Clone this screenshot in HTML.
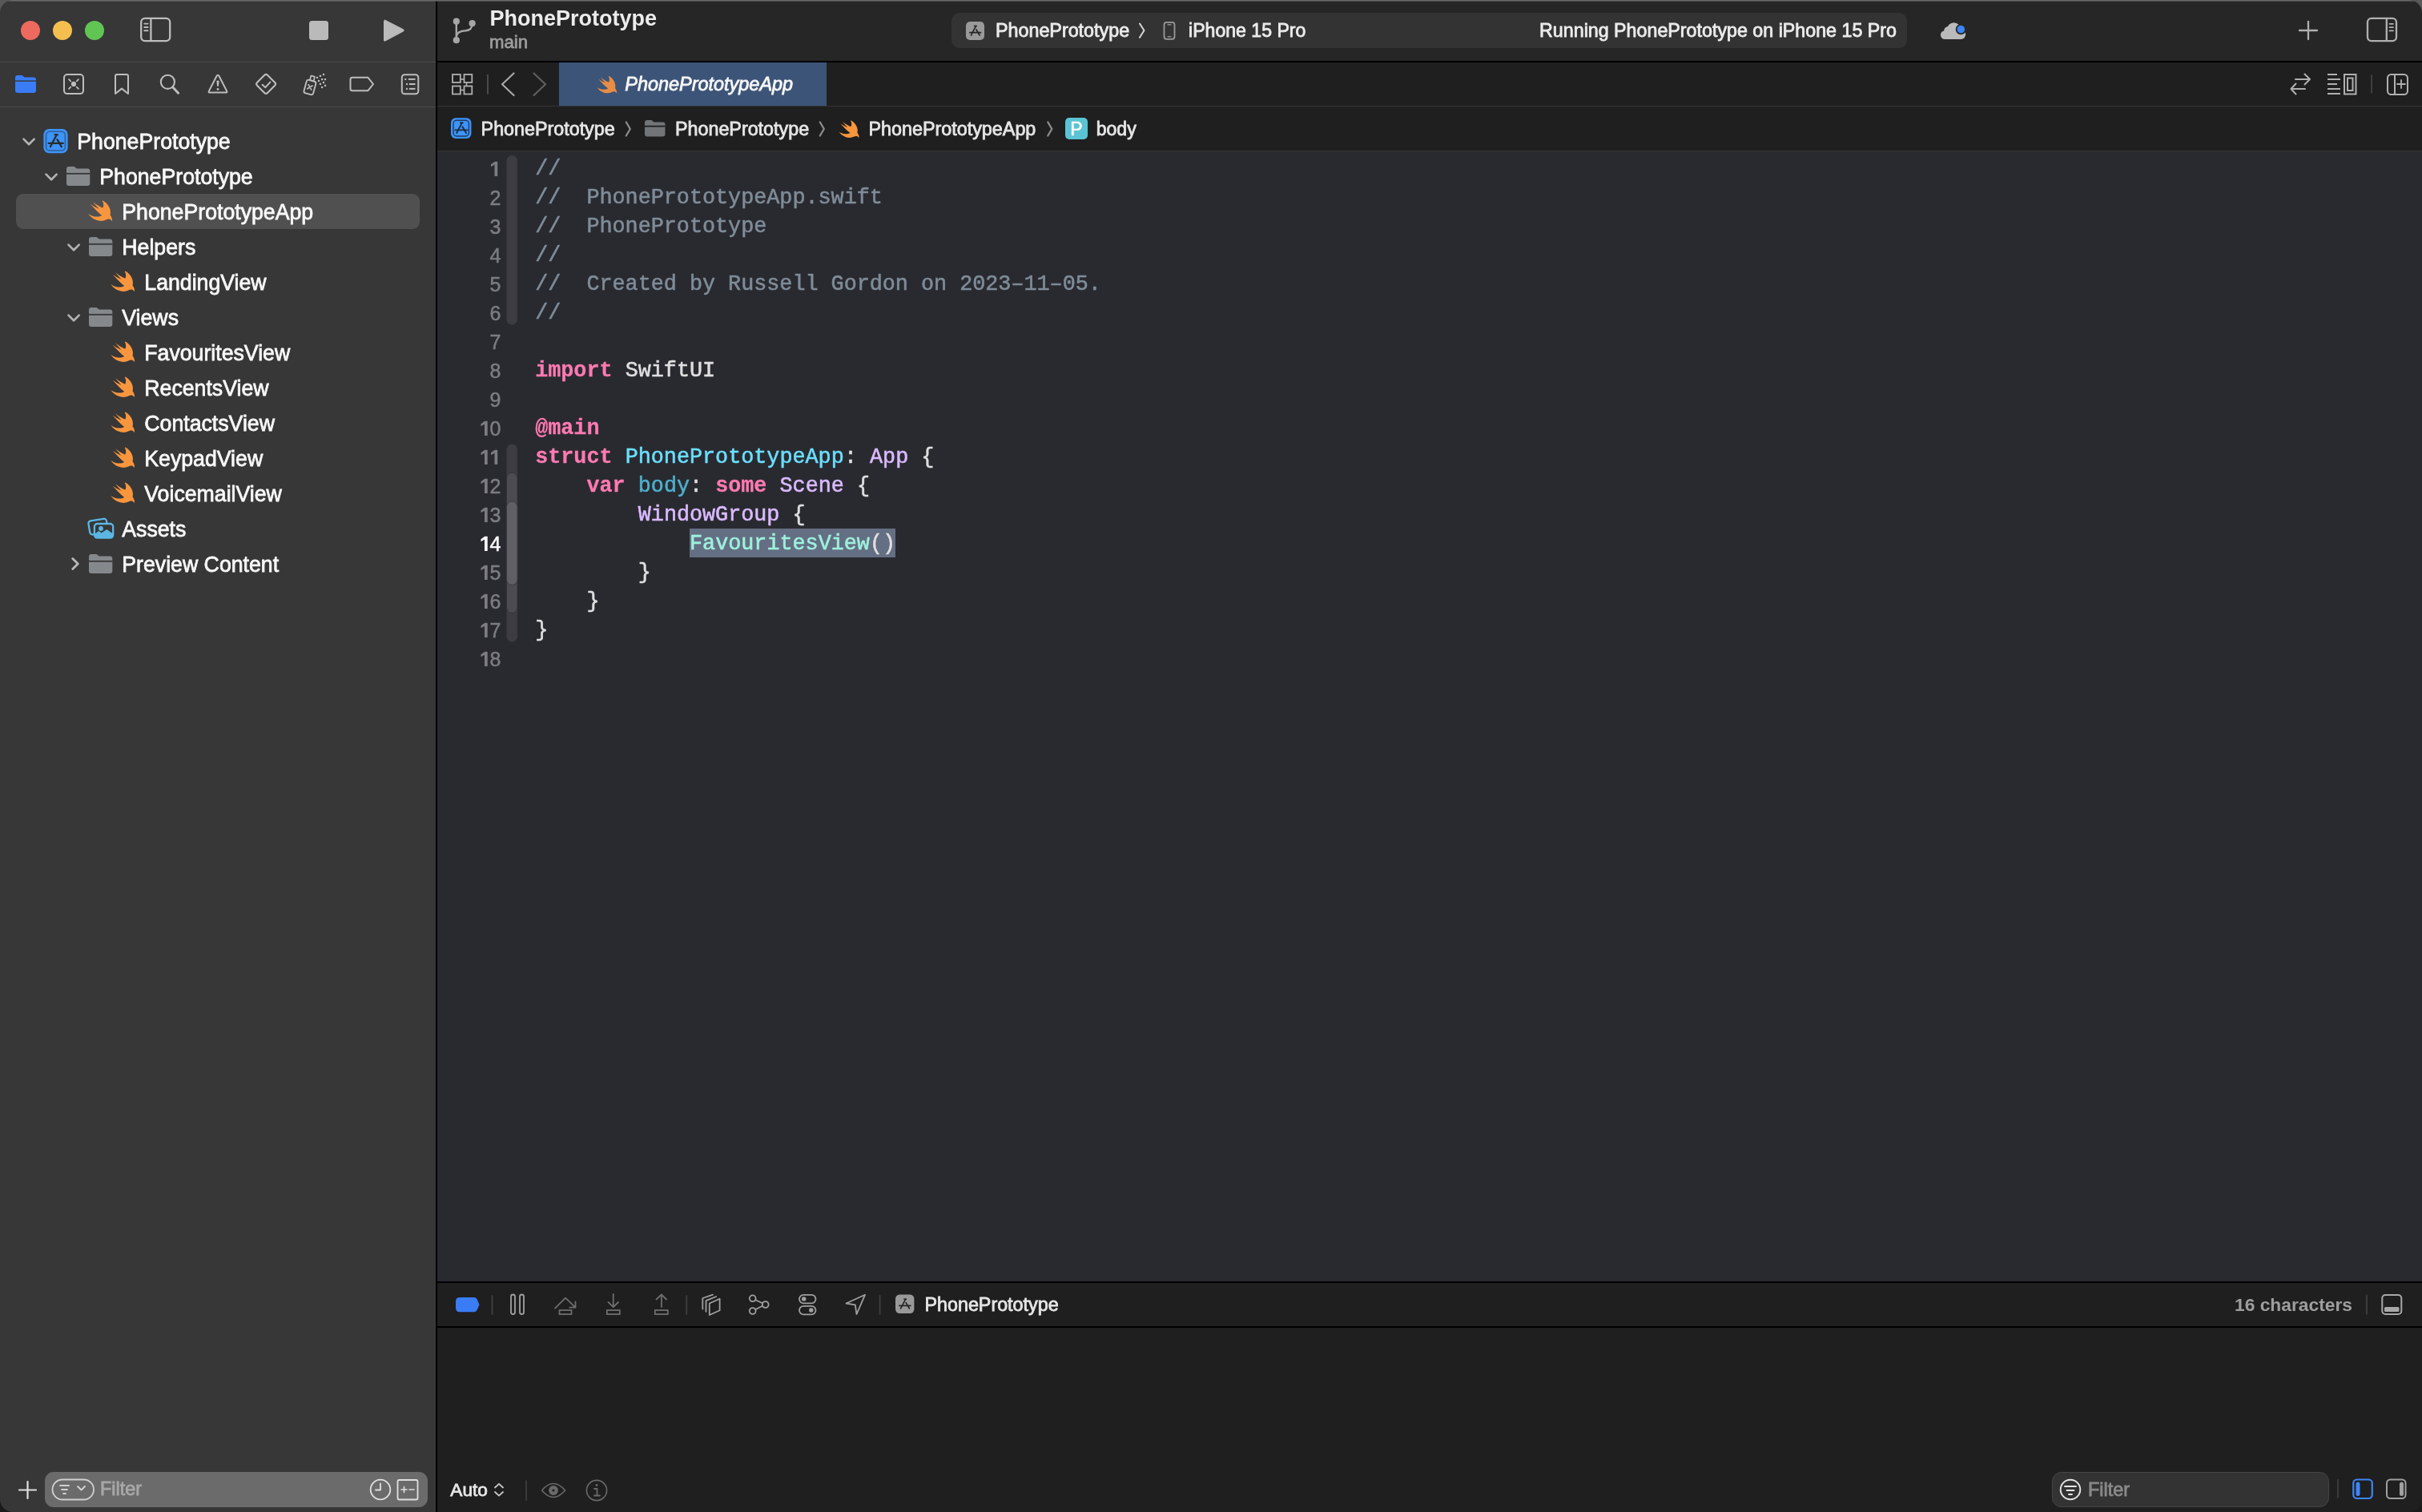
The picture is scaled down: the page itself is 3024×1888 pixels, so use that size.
<!DOCTYPE html>
<html><head><meta charset="utf-8"><title>Xcode</title>
<style>html,body{margin:0;padding:0;background:#000;width:3024px;height:1888px;overflow:hidden}svg{display:block;will-change:transform}</style>
</head><body>
<svg width="3024" height="1888" viewBox="0 0 3024 1888">
<defs><clipPath id="win"><rect x="0" y="0" width="3024" height="1888" rx="16"/></clipPath></defs>
<rect x="0" y="0" width="3024" height="1888" fill="#000" />
<rect x="0" y="0" width="3024" height="24" fill="#585858" />
<rect x="0" y="1864" width="3024" height="24" fill="#1a1a1a" />
<g clip-path="url(#win)">
<rect x="0" y="0" width="544" height="1888" fill="#373737" />
<rect x="544" y="0" width="2" height="1888" fill="#000" />
<rect x="546" y="0" width="2478" height="76" fill="#262626" />
<rect x="546" y="76" width="2478" height="2" fill="#000" />
<rect x="546" y="78" width="2478" height="54" fill="#1f1f1f" />
<rect x="546" y="132" width="2478" height="1" fill="#343434" />
<rect x="698" y="78" width="334" height="54" fill="#3c5478" />
<rect x="546" y="133" width="2478" height="55" fill="#1f1f1f" />
<rect x="546" y="188" width="2478" height="1" fill="#343434" />
<rect x="546" y="189" width="2478" height="1411" fill="#292a30" />
<rect x="546" y="1600" width="2478" height="2" fill="#000" />
<rect x="546" y="1602" width="2478" height="54" fill="#1f1f1f" />
<rect x="546" y="1656" width="2478" height="2" fill="#000" />
<rect x="546" y="1658" width="2478" height="230" fill="#1f1f1f" />
<rect x="0" y="77" width="544" height="1" fill="#4b4b4b" />
<rect x="0" y="133" width="544" height="1" fill="#4b4b4b" />
<rect x="0" y="0" width="3024" height="1.6" fill="#686868" />
</g>
<circle cx="38" cy="38" r="12" fill="#ee6a5e" stroke="none" stroke-width="2"/>
<circle cx="78" cy="38" r="12" fill="#f5bf4f" stroke="none" stroke-width="2"/>
<circle cx="118" cy="38" r="12" fill="#61c554" stroke="none" stroke-width="2"/>
<rect x="176.2" y="22.9" width="36" height="28.2" fill="none" stroke="#bdbdbd" stroke-width="2.3" rx="4.8" />
<line x1="188.4" y1="23" x2="188.4" y2="51" stroke="#bdbdbd" stroke-width="2.3" stroke-linecap="butt"/>
<line x1="180.3" y1="29.6" x2="184.6" y2="29.6" stroke="#bdbdbd" stroke-width="1.9" stroke-linecap="round"/>
<line x1="180.3" y1="34" x2="184.6" y2="34" stroke="#bdbdbd" stroke-width="1.9" stroke-linecap="round"/>
<line x1="180.3" y1="38.3" x2="184.6" y2="38.3" stroke="#bdbdbd" stroke-width="1.9" stroke-linecap="round"/>
<rect x="386" y="26" width="24" height="24" fill="#bababa" rx="3.5" />
<path d="M481 25.3 L503.6 36.8 Q505 37.9 503.6 39 L481 51 Q479.5 51.8 479.5 50 L479.5 26.8 Q479.5 24.6 481 25.3 Z" fill="#bababa" stroke="#bababa" stroke-width="1" stroke-linecap="round" stroke-linejoin="round" />
<path d="M19 97 Q19 94 22 94 L27.58 94 L30.58 96.5 L42 96.5 Q45 96.5 45 99.5 L45 113 Q45 116 42 116 L22 116 Q19 116 19 113 Z" fill="#3a7cf5" stroke="none" stroke-width="2" stroke-linecap="round" stroke-linejoin="round" />
<rect x="19" y="100.4" width="26" height="1.4" fill="#373737" />
<rect x="80" y="93.1" width="24" height="24" fill="none" stroke="#bdbdbd" stroke-width="2" rx="4" />
<circle cx="92" cy="104.9" r="3.1" fill="#bdbdbd" stroke="none" stroke-width="2"/>
<line x1="86.1" y1="99.1" x2="88.2" y2="101.3" stroke="#bdbdbd" stroke-width="1.8" stroke-linecap="round"/>
<line x1="97.9" y1="99.1" x2="95.8" y2="101.3" stroke="#bdbdbd" stroke-width="1.8" stroke-linecap="round"/>
<line x1="86.1" y1="110.9" x2="88.2" y2="108.7" stroke="#bdbdbd" stroke-width="1.8" stroke-linecap="round"/>
<line x1="97.9" y1="110.9" x2="95.8" y2="108.7" stroke="#bdbdbd" stroke-width="1.8" stroke-linecap="round"/>
<path d="M144 117 L144 95 Q144 93.1 146 93.1 L158 93.1 Q160 93.1 160 95 L160 117 L152 110.6 Z" fill="none" stroke="#bdbdbd" stroke-width="2" stroke-linecap="round" stroke-linejoin="round" />
<circle cx="209.4" cy="102.3" r="8.6" fill="none" stroke="#bdbdbd" stroke-width="2.1"/>
<line x1="215.6" y1="108.8" x2="222.6" y2="116.2" stroke="#bdbdbd" stroke-width="3" stroke-linecap="round"/>
<path d="M270.6 94.8 Q272 92.6 273.4 94.8 L283.1 113.6 Q284 115.6 281.8 115.6 L262.2 115.6 Q260 115.6 260.9 113.6 Z" fill="none" stroke="#bdbdbd" stroke-width="2" stroke-linecap="round" stroke-linejoin="round" />
<path d="M270.4 101 Q272 100.2 273.6 101 L272.9 107.6 Q272 108.2 271.1 107.6 Z" fill="#bdbdbd" stroke="none" stroke-width="2" stroke-linecap="round" stroke-linejoin="round" />
<circle cx="272" cy="111.4" r="1.45" fill="#bdbdbd" stroke="none" stroke-width="2"/>
<rect x="-9.15" y="-9.15" width="18.3" height="18.3" rx="2.6" fill="none" stroke="#bdbdbd" stroke-width="2.1" transform="translate(332.1,104.9) rotate(45)"/>
<path d="M327.6 105.8 L331.4 109.2 L337.3 102.6" fill="none" stroke="#bdbdbd" stroke-width="2" stroke-linecap="round" stroke-linejoin="round" />
<g transform="rotate(15 387 108)">
<rect x="381.2" y="100.5" width="12" height="17" fill="none" stroke="#bdbdbd" stroke-width="1.9" rx="2.5" />
<rect x="384.8" y="94.6" width="4.8" height="5.6" fill="none" stroke="#bdbdbd" stroke-width="1.7" rx="0.5" />
<path d="M384.6 106.3 L389.8 111.5 M389.8 106.3 L384.6 111.5" fill="none" stroke="#bdbdbd" stroke-width="1.7" stroke-linecap="round" stroke-linejoin="round" />
</g>
<rect x="402.9" y="91.9" width="2.2" height="2.2" fill="#bdbdbd" />
<rect x="398.79999999999995" y="93.80000000000001" width="2.2" height="2.2" fill="#bdbdbd" />
<rect x="394.9" y="95.80000000000001" width="2.2" height="2.2" fill="#bdbdbd" />
<rect x="401.0" y="98.0" width="2.2" height="2.2" fill="#bdbdbd" />
<rect x="404.9" y="98.0" width="2.2" height="2.2" fill="#bdbdbd" />
<rect x="396.9" y="99.9" width="2.2" height="2.2" fill="#bdbdbd" />
<rect x="402.9" y="101.9" width="2.2" height="2.2" fill="#bdbdbd" />
<rect x="398.79999999999995" y="103.80000000000001" width="2.2" height="2.2" fill="#bdbdbd" />
<rect x="404.9" y="105.80000000000001" width="2.2" height="2.2" fill="#bdbdbd" />
<rect x="401.0" y="107.9" width="2.2" height="2.2" fill="#bdbdbd" />
<path d="M440 96.8 L459.5 96.8 L466 105 L459.5 113.2 L440 113.2 Q437.5 113.2 437.5 110.7 L437.5 99.3 Q437.5 96.8 440 96.8 Z" fill="none" stroke="#bdbdbd" stroke-width="2" stroke-linecap="round" stroke-linejoin="round" />
<rect x="501.8" y="93.2" width="20.5" height="24" fill="none" stroke="#bdbdbd" stroke-width="2" rx="3.5" />
<line x1="509.8" y1="98.9" x2="518.5" y2="98.9" stroke="#bdbdbd" stroke-width="2" stroke-linecap="butt"/>
<rect x="505.3" y="97.9" width="2" height="2" fill="#bdbdbd" />
<line x1="510.8" y1="105" x2="518.5" y2="105" stroke="#bdbdbd" stroke-width="2" stroke-linecap="butt"/>
<rect x="507" y="104" width="2" height="2" fill="#bdbdbd" />
<line x1="510.8" y1="110.9" x2="518.5" y2="110.9" stroke="#bdbdbd" stroke-width="2" stroke-linecap="butt"/>
<rect x="507" y="109.9" width="2" height="2" fill="#bdbdbd" />
<rect x="20" y="242" width="504" height="44" fill="#505050" rx="9" />
<path d="M29.50 173.60 L36.10 180.20 L42.70 173.60" fill="none" stroke="#b2b2b2" stroke-width="2.7" stroke-linecap="round" stroke-linejoin="round" />
<rect x="54.4" y="161" width="30.2" height="30.2" fill="#3d94f9" rx="7" />
<rect x="57.6" y="164.2" width="23.8" height="23.8" fill="none" stroke="#2f5f95" stroke-width="1.6" rx="4.5" />
<rect x="54.4" y="161" width="30.2" height="30.2" fill="none" rx="6.644" />
<path d="M70.51 168.65 L62.86 183.35" fill="none" stroke="#2a2a2a" stroke-width="2.2146666666666666" stroke-linecap="round" stroke-linejoin="round" />
<path d="M71.41 174.09 L76.85 183.35" fill="none" stroke="#2a2a2a" stroke-width="2.2146666666666666" stroke-linecap="round" stroke-linejoin="round" />
<path d="M60.74 178.92 L78.76 178.92" fill="none" stroke="#2a2a2a" stroke-width="2.2146666666666666" stroke-linecap="round" stroke-linejoin="round" />
<path d="M68.29 168.05 L72.02 168.25" fill="none" stroke="#2a2a2a" stroke-width="1.9931999999999999" stroke-linecap="round" stroke-linejoin="round" />
<text x="96.3" y="186" font-family="Liberation Sans" font-size="26.7" fill="#f8f8f8" font-weight="normal" text-anchor="start" stroke="#f8f8f8" stroke-width="0.75" transform="matrix(1 0 0 1.05 0 -9.300)" style="white-space:pre;" >PhonePrototype</text>
<path d="M57.50 217.60 L64.10 224.20 L70.70 217.60" fill="none" stroke="#b2b2b2" stroke-width="2.7" stroke-linecap="round" stroke-linejoin="round" />
<path d="M83.0 211 Q83.0 208 86.0 208 L92.669 208 L95.669 210.5 L109.3 210.5 Q112.3 210.5 112.3 213.5 L112.3 229 Q112.3 232 109.3 232 L86.0 232 Q83.0 232 83.0 229 Z" fill="#86898c" stroke="none" stroke-width="2" stroke-linecap="round" stroke-linejoin="round" />
<rect x="83.0" y="215.92" width="29.3" height="1.8" fill="#373737" />
<text x="124.3" y="230" font-family="Liberation Sans" font-size="26.7" fill="#f8f8f8" font-weight="normal" text-anchor="start" stroke="#f8f8f8" stroke-width="0.75" transform="matrix(1 0 0 1.05 0 -11.500)" style="white-space:pre;" >PhonePrototype</text>
<path d="M13.543 3.41c4.114 2.47 6.545 7.162 5.549 11.131-.024.093-.05.181-.076.272l.002.001c2.062 2.538 1.5 5.258 1.236 4.745-1.072-2.086-3.066-1.568-4.088-1.043a6.803 6.803 0 0 1-.281.158l-.02.012-.002.002c-2.115 1.123-4.957 1.205-7.812-.022a12.568 12.568 0 0 1-5.64-4.838c.649.48 1.35.902 2.097 1.252 3.019 1.414 6.051 1.311 8.197-.002C9.651 12.73 7.101 9.736 5.146 7.545a18.849 18.849 0 0 1-1.125-1.477c2.05 1.957 5.322 3.27 6.525 3.906C8.073 7.407 5.862 4.212 5.942 4.281c3.035 3.044 7.226 4.743 7.548 4.87 1.252-3.378-.46-5.3-.46-5.3z" fill="#f8963e" transform="translate(106.35,245.26) scale(1.6393,1.5667)"/>
<text x="152.3" y="274" font-family="Liberation Sans" font-size="26.7" fill="#f8f8f8" font-weight="normal" text-anchor="start" stroke="#f8f8f8" stroke-width="0.75" transform="matrix(1 0 0 1.05 0 -13.700)" style="white-space:pre;" >PhonePrototypeApp</text>
<path d="M85.50 305.60 L92.10 312.20 L98.70 305.60" fill="none" stroke="#b2b2b2" stroke-width="2.7" stroke-linecap="round" stroke-linejoin="round" />
<path d="M111.00000000000001 299 Q111.00000000000001 296 114.00000000000001 296 L120.66900000000001 296 L123.66900000000001 298.5 L137.3 298.5 Q140.3 298.5 140.3 301.5 L140.3 317 Q140.3 320 137.3 320 L114.00000000000001 320 Q111.00000000000001 320 111.00000000000001 317 Z" fill="#86898c" stroke="none" stroke-width="2" stroke-linecap="round" stroke-linejoin="round" />
<rect x="111.00000000000001" y="303.92" width="29.3" height="1.8" fill="#373737" />
<text x="152.3" y="318" font-family="Liberation Sans" font-size="26.7" fill="#f8f8f8" font-weight="normal" text-anchor="start" stroke="#f8f8f8" stroke-width="0.75" transform="matrix(1 0 0 1.05 0 -15.900)" style="white-space:pre;" >Helpers</text>
<path d="M13.543 3.41c4.114 2.47 6.545 7.162 5.549 11.131-.024.093-.05.181-.076.272l.002.001c2.062 2.538 1.5 5.258 1.236 4.745-1.072-2.086-3.066-1.568-4.088-1.043a6.803 6.803 0 0 1-.281.158l-.02.012-.002.002c-2.115 1.123-4.957 1.205-7.812-.022a12.568 12.568 0 0 1-5.64-4.838c.649.48 1.35.902 2.097 1.252 3.019 1.414 6.051 1.311 8.197-.002C9.651 12.73 7.101 9.736 5.146 7.545a18.849 18.849 0 0 1-1.125-1.477c2.05 1.957 5.322 3.27 6.525 3.906C8.073 7.407 5.862 4.212 5.942 4.281c3.035 3.044 7.226 4.743 7.548 4.87 1.252-3.378-.46-5.3-.46-5.3z" fill="#f8963e" transform="translate(134.35,333.26) scale(1.6393,1.5667)"/>
<text x="180.3" y="362" font-family="Liberation Sans" font-size="26.7" fill="#f8f8f8" font-weight="normal" text-anchor="start" stroke="#f8f8f8" stroke-width="0.75" transform="matrix(1 0 0 1.05 0 -18.100)" style="white-space:pre;" >LandingView</text>
<path d="M85.50 393.60 L92.10 400.20 L98.70 393.60" fill="none" stroke="#b2b2b2" stroke-width="2.7" stroke-linecap="round" stroke-linejoin="round" />
<path d="M111.00000000000001 387 Q111.00000000000001 384 114.00000000000001 384 L120.66900000000001 384 L123.66900000000001 386.5 L137.3 386.5 Q140.3 386.5 140.3 389.5 L140.3 405 Q140.3 408 137.3 408 L114.00000000000001 408 Q111.00000000000001 408 111.00000000000001 405 Z" fill="#86898c" stroke="none" stroke-width="2" stroke-linecap="round" stroke-linejoin="round" />
<rect x="111.00000000000001" y="391.92" width="29.3" height="1.8" fill="#373737" />
<text x="152.3" y="406" font-family="Liberation Sans" font-size="26.7" fill="#f8f8f8" font-weight="normal" text-anchor="start" stroke="#f8f8f8" stroke-width="0.75" transform="matrix(1 0 0 1.05 0 -20.300)" style="white-space:pre;" >Views</text>
<path d="M13.543 3.41c4.114 2.47 6.545 7.162 5.549 11.131-.024.093-.05.181-.076.272l.002.001c2.062 2.538 1.5 5.258 1.236 4.745-1.072-2.086-3.066-1.568-4.088-1.043a6.803 6.803 0 0 1-.281.158l-.02.012-.002.002c-2.115 1.123-4.957 1.205-7.812-.022a12.568 12.568 0 0 1-5.64-4.838c.649.48 1.35.902 2.097 1.252 3.019 1.414 6.051 1.311 8.197-.002C9.651 12.73 7.101 9.736 5.146 7.545a18.849 18.849 0 0 1-1.125-1.477c2.05 1.957 5.322 3.27 6.525 3.906C8.073 7.407 5.862 4.212 5.942 4.281c3.035 3.044 7.226 4.743 7.548 4.87 1.252-3.378-.46-5.3-.46-5.3z" fill="#f8963e" transform="translate(134.35,421.26) scale(1.6393,1.5667)"/>
<text x="180.3" y="450" font-family="Liberation Sans" font-size="26.7" fill="#f8f8f8" font-weight="normal" text-anchor="start" stroke="#f8f8f8" stroke-width="0.75" transform="matrix(1 0 0 1.05 0 -22.500)" style="white-space:pre;" >FavouritesView</text>
<path d="M13.543 3.41c4.114 2.47 6.545 7.162 5.549 11.131-.024.093-.05.181-.076.272l.002.001c2.062 2.538 1.5 5.258 1.236 4.745-1.072-2.086-3.066-1.568-4.088-1.043a6.803 6.803 0 0 1-.281.158l-.02.012-.002.002c-2.115 1.123-4.957 1.205-7.812-.022a12.568 12.568 0 0 1-5.64-4.838c.649.48 1.35.902 2.097 1.252 3.019 1.414 6.051 1.311 8.197-.002C9.651 12.73 7.101 9.736 5.146 7.545a18.849 18.849 0 0 1-1.125-1.477c2.05 1.957 5.322 3.27 6.525 3.906C8.073 7.407 5.862 4.212 5.942 4.281c3.035 3.044 7.226 4.743 7.548 4.87 1.252-3.378-.46-5.3-.46-5.3z" fill="#f8963e" transform="translate(134.35,465.26) scale(1.6393,1.5667)"/>
<text x="180.3" y="494" font-family="Liberation Sans" font-size="26.7" fill="#f8f8f8" font-weight="normal" text-anchor="start" stroke="#f8f8f8" stroke-width="0.75" transform="matrix(1 0 0 1.05 0 -24.700)" style="white-space:pre;" >RecentsView</text>
<path d="M13.543 3.41c4.114 2.47 6.545 7.162 5.549 11.131-.024.093-.05.181-.076.272l.002.001c2.062 2.538 1.5 5.258 1.236 4.745-1.072-2.086-3.066-1.568-4.088-1.043a6.803 6.803 0 0 1-.281.158l-.02.012-.002.002c-2.115 1.123-4.957 1.205-7.812-.022a12.568 12.568 0 0 1-5.64-4.838c.649.48 1.35.902 2.097 1.252 3.019 1.414 6.051 1.311 8.197-.002C9.651 12.73 7.101 9.736 5.146 7.545a18.849 18.849 0 0 1-1.125-1.477c2.05 1.957 5.322 3.27 6.525 3.906C8.073 7.407 5.862 4.212 5.942 4.281c3.035 3.044 7.226 4.743 7.548 4.87 1.252-3.378-.46-5.3-.46-5.3z" fill="#f8963e" transform="translate(134.35,509.26) scale(1.6393,1.5667)"/>
<text x="180.3" y="538" font-family="Liberation Sans" font-size="26.7" fill="#f8f8f8" font-weight="normal" text-anchor="start" stroke="#f8f8f8" stroke-width="0.75" transform="matrix(1 0 0 1.05 0 -26.900)" style="white-space:pre;" >ContactsView</text>
<path d="M13.543 3.41c4.114 2.47 6.545 7.162 5.549 11.131-.024.093-.05.181-.076.272l.002.001c2.062 2.538 1.5 5.258 1.236 4.745-1.072-2.086-3.066-1.568-4.088-1.043a6.803 6.803 0 0 1-.281.158l-.02.012-.002.002c-2.115 1.123-4.957 1.205-7.812-.022a12.568 12.568 0 0 1-5.64-4.838c.649.48 1.35.902 2.097 1.252 3.019 1.414 6.051 1.311 8.197-.002C9.651 12.73 7.101 9.736 5.146 7.545a18.849 18.849 0 0 1-1.125-1.477c2.05 1.957 5.322 3.27 6.525 3.906C8.073 7.407 5.862 4.212 5.942 4.281c3.035 3.044 7.226 4.743 7.548 4.87 1.252-3.378-.46-5.3-.46-5.3z" fill="#f8963e" transform="translate(134.35,553.26) scale(1.6393,1.5667)"/>
<text x="180.3" y="582" font-family="Liberation Sans" font-size="26.7" fill="#f8f8f8" font-weight="normal" text-anchor="start" stroke="#f8f8f8" stroke-width="0.75" transform="matrix(1 0 0 1.05 0 -29.100)" style="white-space:pre;" >KeypadView</text>
<path d="M13.543 3.41c4.114 2.47 6.545 7.162 5.549 11.131-.024.093-.05.181-.076.272l.002.001c2.062 2.538 1.5 5.258 1.236 4.745-1.072-2.086-3.066-1.568-4.088-1.043a6.803 6.803 0 0 1-.281.158l-.02.012-.002.002c-2.115 1.123-4.957 1.205-7.812-.022a12.568 12.568 0 0 1-5.64-4.838c.649.48 1.35.902 2.097 1.252 3.019 1.414 6.051 1.311 8.197-.002C9.651 12.73 7.101 9.736 5.146 7.545a18.849 18.849 0 0 1-1.125-1.477c2.05 1.957 5.322 3.27 6.525 3.906C8.073 7.407 5.862 4.212 5.942 4.281c3.035 3.044 7.226 4.743 7.548 4.87 1.252-3.378-.46-5.3-.46-5.3z" fill="#f8963e" transform="translate(134.35,597.26) scale(1.6393,1.5667)"/>
<text x="180.3" y="626" font-family="Liberation Sans" font-size="26.7" fill="#f8f8f8" font-weight="normal" text-anchor="start" stroke="#f8f8f8" stroke-width="0.75" transform="matrix(1 0 0 1.05 0 -31.300)" style="white-space:pre;" >VoicemailView</text>
<g transform="translate(0,0)">
<rect x="-11.4" y="-8.6" width="22.8" height="17.2" rx="3.2" fill="none" stroke="#5bb6e4" stroke-width="2.3" transform="translate(122.6,657.6) rotate(-9.5)"/>
<rect x="117.9" y="654" width="23.3" height="17.7" fill="#373737" rx="3.6" stroke="#5bb6e4" stroke-width="2.3"/>
<path d="M118.8 666.3 L123.4 662.9 L126.6 665.6 L133.4 661.1 L141 666.6 L141 668.5 Q141 671 138.5 671 L121.5 671 Q118.8 671 118.8 668.5 Z" fill="#5bb6e4" stroke="none" stroke-width="2" stroke-linecap="round" stroke-linejoin="round" />
<circle cx="126" cy="660" r="2.9" fill="#5bb6e4" stroke="none" stroke-width="2"/>
</g>
<text x="152.3" y="670" font-family="Liberation Sans" font-size="26.7" fill="#f8f8f8" font-weight="normal" text-anchor="start" stroke="#f8f8f8" stroke-width="0.75" transform="matrix(1 0 0 1.05 0 -33.500)" style="white-space:pre;" >Assets</text>
<path d="M90.70 697.40 L97.30 704.00 L90.70 710.60" fill="none" stroke="#b8b8b8" stroke-width="2.8" stroke-linecap="round" stroke-linejoin="round" />
<path d="M111.00000000000001 695 Q111.00000000000001 692 114.00000000000001 692 L120.66900000000001 692 L123.66900000000001 694.5 L137.3 694.5 Q140.3 694.5 140.3 697.5 L140.3 713 Q140.3 716 137.3 716 L114.00000000000001 716 Q111.00000000000001 716 111.00000000000001 713 Z" fill="#86898c" stroke="none" stroke-width="2" stroke-linecap="round" stroke-linejoin="round" />
<rect x="111.00000000000001" y="699.92" width="29.3" height="1.8" fill="#373737" />
<text x="152.3" y="714" font-family="Liberation Sans" font-size="26.7" fill="#f8f8f8" font-weight="normal" text-anchor="start" stroke="#f8f8f8" stroke-width="0.75" transform="matrix(1 0 0 1.05 0 -35.700)" style="white-space:pre;" >Preview Content</text>
<path d="M34.5 1850 L34.5 1871 M24 1860.5 L45 1860.5" fill="none" stroke="#e0e0e0" stroke-width="2.2" stroke-linecap="round" stroke-linejoin="round" />
<rect x="56" y="1838" width="478" height="44" fill="#6b6b6b" rx="11" />
<rect x="65.5" y="1847.5" width="51.5" height="25" fill="none" stroke="#d0d0d0" stroke-width="1.8" rx="12.5" />
<path d="M75 1855 L86 1855 M77 1860 L84 1860 M79 1865 L82 1865" fill="none" stroke="#d0d0d0" stroke-width="1.8" stroke-linecap="round" stroke-linejoin="round" />
<path d="M97 1856 L101.5 1860.5 L106 1856" fill="none" stroke="#d0d0d0" stroke-width="2" stroke-linecap="round" stroke-linejoin="round" />
<text x="125" y="1867" font-family="Liberation Sans" font-size="23.4" fill="#a8a8a8" font-weight="normal" text-anchor="start" stroke="#a8a8a8" stroke-width="0.8" style="white-space:pre;" >Filter</text>
<circle cx="475" cy="1860" r="12.3" fill="none" stroke="#e0e0e0" stroke-width="1.8"/>
<path d="M475 1852.5 L475 1860.5 L469 1860.5" fill="none" stroke="#e0e0e0" stroke-width="1.8" stroke-linecap="round" stroke-linejoin="round" />
<rect x="496.5" y="1848" width="25" height="24.5" fill="none" stroke="#e0e0e0" stroke-width="1.8" rx="2" />
<path d="M501 1860 L508 1860 M504.5 1856.5 L504.5 1863.5 M511 1860 L517 1860" fill="none" stroke="#e0e0e0" stroke-width="1.6" stroke-linecap="round" stroke-linejoin="round" />
<circle cx="569.8" cy="26.7" r="4.1" fill="#a6a6a6" stroke="none" stroke-width="2"/>
<circle cx="589.6" cy="29.2" r="4.1" fill="#a6a6a6" stroke="none" stroke-width="2"/>
<circle cx="569.8" cy="50.2" r="4.1" fill="#a6a6a6" stroke="none" stroke-width="2"/>
<path d="M569.8 26.7 L569.8 50.2" fill="none" stroke="#a6a6a6" stroke-width="2.4" stroke-linecap="round" stroke-linejoin="round" />
<path d="M570 45 C570.5 40.5 575 38.7 581.5 38.3 C587 37.8 589.6 35.5 589.6 29.2" fill="none" stroke="#a6a6a6" stroke-width="2.4" stroke-linecap="round" stroke-linejoin="round" />
<text x="611.5" y="32" font-family="Liberation Sans" font-size="27" fill="#ececec" font-weight="bold" text-anchor="start" style="white-space:pre;" >PhonePrototype</text>
<text x="611" y="60" font-family="Liberation Sans" font-size="22.2" fill="#9c9c9c" font-weight="normal" text-anchor="start" stroke="#9c9c9c" stroke-width="0.8" style="white-space:pre;" >main</text>
<rect x="1188" y="16" width="1193" height="44" fill="#333333" rx="10" />
<rect x="1206" y="27" width="23" height="23" fill="#999999" rx="5.06" />
<path d="M1218.27 32.83 L1212.44 44.02" fill="none" stroke="#262626" stroke-width="1.686666666666667" stroke-linecap="round" stroke-linejoin="round" />
<path d="M1218.96 36.97 L1223.10 44.02" fill="none" stroke="#262626" stroke-width="1.686666666666667" stroke-linecap="round" stroke-linejoin="round" />
<path d="M1210.83 40.65 L1224.55 40.65" fill="none" stroke="#262626" stroke-width="1.686666666666667" stroke-linecap="round" stroke-linejoin="round" />
<path d="M1216.58 32.37 L1219.42 32.52" fill="none" stroke="#262626" stroke-width="1.5180000000000002" stroke-linecap="round" stroke-linejoin="round" />
<text x="1243" y="46" font-family="Liberation Sans" font-size="23.3" fill="#ececec" font-weight="normal" text-anchor="start" stroke="#ececec" stroke-width="0.8" style="white-space:pre;" >PhonePrototype</text>
<path d="M1423 29.5 L1428.5 38 L1423 46.8" fill="none" stroke="#d8d8d8" stroke-width="2" stroke-linecap="round" stroke-linejoin="round" />
<rect x="1453.5" y="27.8" width="13" height="21" fill="none" stroke="#9a9a9a" stroke-width="1.8" rx="3" />
<rect x="1457.5" y="30.2" width="5" height="1.3" fill="#9a9a9a" />
<rect x="1457.5" y="45.2" width="5" height="1.3" fill="#9a9a9a" />
<text x="1484" y="46" font-family="Liberation Sans" font-size="23.1" fill="#ececec" font-weight="normal" text-anchor="start" stroke="#ececec" stroke-width="0.8" style="white-space:pre;" >iPhone 15 Pro</text>
<text x="2368" y="46" font-family="Liberation Sans" font-size="23.25" fill="#ececec" font-weight="normal" text-anchor="end" stroke="#ececec" stroke-width="0.8" style="white-space:pre;" >Running PhonePrototype on iPhone 15 Pro</text>
<circle cx="2428.3" cy="43.6" r="5.4" fill="#bababa" stroke="none" stroke-width="2"/>
<circle cx="2432.2" cy="38.2" r="5" fill="#bababa" stroke="none" stroke-width="2"/>
<circle cx="2439.5" cy="36.8" r="8.6" fill="#bababa" stroke="none" stroke-width="2"/>
<circle cx="2448.3" cy="43.1" r="5.9" fill="#bababa" stroke="none" stroke-width="2"/>
<rect x="2428.3" y="40" width="20" height="9" fill="#bababa" />
<circle cx="2448.3" cy="36.6" r="6.6" fill="#262626" stroke="none" stroke-width="2"/>
<circle cx="2448.3" cy="36.6" r="4.8" fill="#3d85f6" stroke="none" stroke-width="2"/>
<path d="M2882 27 L2882 49 M2871 38 L2893 38" fill="none" stroke="#b0b0b0" stroke-width="2.3" stroke-linecap="round" stroke-linejoin="round" />
<rect x="2956" y="22.9" width="36" height="28.2" fill="none" stroke="#b0b0b0" stroke-width="2.3" rx="4.8" />
<line x1="2979.8" y1="23.5" x2="2979.8" y2="51.5" stroke="#b0b0b0" stroke-width="2.3" stroke-linecap="butt"/>
<line x1="2983.5" y1="29.8" x2="2988" y2="29.8" stroke="#b0b0b0" stroke-width="1.8" stroke-linecap="round"/>
<line x1="2983.5" y1="34.1" x2="2988" y2="34.1" stroke="#b0b0b0" stroke-width="1.8" stroke-linecap="round"/>
<line x1="2983.5" y1="38.4" x2="2988" y2="38.4" stroke="#b0b0b0" stroke-width="1.8" stroke-linecap="round"/>
<rect x="565" y="93" width="9.8" height="10" fill="none" stroke="#b0b0b0" stroke-width="1.8" />
<rect x="579.5" y="93" width="9.8" height="10" fill="none" stroke="#b0b0b0" stroke-width="1.8" />
<rect x="565" y="107.5" width="9.8" height="10" fill="none" stroke="#b0b0b0" stroke-width="1.8" />
<rect x="579.5" y="107.5" width="9.8" height="10" fill="none" stroke="#b0b0b0" stroke-width="1.8" />
<line x1="574.8" y1="99" x2="579.5" y2="99" stroke="#b0b0b0" stroke-width="1.6" stroke-linecap="butt"/>
<line x1="582.5" y1="103" x2="582.5" y2="107.5" stroke="#b0b0b0" stroke-width="1.6" stroke-linecap="butt"/>
<line x1="574.8" y1="112.5" x2="579.5" y2="112.5" stroke="#b0b0b0" stroke-width="1.6" stroke-linecap="butt"/>
<line x1="609" y1="93.5" x2="609" y2="117" stroke="#555555" stroke-width="1.6" stroke-linecap="round"/>
<path d="M641.5 91.5 L627 105.2 L641.5 119" fill="none" stroke="#a8a8a8" stroke-width="2.2" stroke-linecap="round" stroke-linejoin="round" />
<path d="M666.5 91.5 L681 105.2 L666.5 119" fill="none" stroke="#5f5f5f" stroke-width="2.2" stroke-linecap="round" stroke-linejoin="round" />
<path d="M13.543 3.41c4.114 2.47 6.545 7.162 5.549 11.131-.024.093-.05.181-.076.272l.002.001c2.062 2.538 1.5 5.258 1.236 4.745-1.072-2.086-3.066-1.568-4.088-1.043a6.803 6.803 0 0 1-.281.158l-.02.012-.002.002c-2.115 1.123-4.957 1.205-7.812-.022a12.568 12.568 0 0 1-5.64-4.838c.649.48 1.35.902 2.097 1.252 3.019 1.414 6.051 1.311 8.197-.002C9.651 12.73 7.101 9.736 5.146 7.545a18.849 18.849 0 0 1-1.125-1.477c2.05 1.957 5.322 3.27 6.525 3.906C8.073 7.407 5.862 4.212 5.942 4.281c3.035 3.044 7.226 4.743 7.548 4.87 1.252-3.378-.46-5.3-.46-5.3z" fill="#e98d45" transform="translate(741.67,90.50) scale(1.3799,1.3200)"/>
<text x="780.3" y="113.2" font-family="Liberation Sans" font-size="23.45" fill="#f6f6f6" font-weight="normal" text-anchor="start" stroke="#f6f6f6" stroke-width="0.8" style="white-space:pre;font-style:italic" >PhonePrototypeApp</text>
<path d="M2866 99 L2883.5 99 M2877.5 92.5 L2884 99 L2877.5 105.5" fill="none" stroke="#b0b0b0" stroke-width="2" stroke-linecap="round" stroke-linejoin="round" />
<path d="M2878 111 L2860.5 111 M2866.5 104.5 L2860.5 111 L2866.5 117.5" fill="none" stroke="#b0b0b0" stroke-width="2" stroke-linecap="round" stroke-linejoin="round" />
<line x1="2906" y1="93" x2="2918" y2="93" stroke="#b0b0b0" stroke-width="2" stroke-linecap="butt"/>
<line x1="2906" y1="99" x2="2922" y2="99" stroke="#b0b0b0" stroke-width="2" stroke-linecap="butt"/>
<line x1="2906" y1="105" x2="2918" y2="105" stroke="#b0b0b0" stroke-width="2" stroke-linecap="butt"/>
<line x1="2906" y1="111" x2="2922" y2="111" stroke="#b0b0b0" stroke-width="2" stroke-linecap="butt"/>
<line x1="2906" y1="117" x2="2922" y2="117" stroke="#b0b0b0" stroke-width="2" stroke-linecap="butt"/>
<rect x="2927" y="93" width="14.5" height="24.5" fill="none" stroke="#b0b0b0" stroke-width="2" />
<rect x="2931" y="97.5" width="6.5" height="15.5" fill="none" stroke="#b0b0b0" stroke-width="2" />
<line x1="2961" y1="94" x2="2961" y2="116" stroke="#4a4a4a" stroke-width="1.5" stroke-linecap="round"/>
<rect x="2981" y="93" width="25" height="25" fill="none" stroke="#b0b0b0" stroke-width="2" rx="4.5" />
<line x1="2990" y1="93" x2="2990" y2="118" stroke="#b0b0b0" stroke-width="2" stroke-linecap="butt"/>
<path d="M2998 100 L2998 110 M2993 105 L3003 105" fill="none" stroke="#b0b0b0" stroke-width="1.8" stroke-linecap="round" stroke-linejoin="round" />
<rect x="563" y="147.2" width="25.4" height="25.8" fill="#3d94f9" rx="6" />
<rect x="566" y="150.2" width="19.4" height="19.8" fill="none" stroke="#1f3a60" stroke-width="1.4" rx="4" />
<rect x="563" y="147.2" width="25.6" height="25.6" fill="none" rx="5.632000000000001" />
<path d="M576.65 153.69 L570.17 166.14" fill="none" stroke="#1c2a3a" stroke-width="1.8773333333333335" stroke-linecap="round" stroke-linejoin="round" />
<path d="M577.42 158.29 L582.03 166.14" fill="none" stroke="#1c2a3a" stroke-width="1.8773333333333335" stroke-linecap="round" stroke-linejoin="round" />
<path d="M568.38 162.39 L583.65 162.39" fill="none" stroke="#1c2a3a" stroke-width="1.8773333333333335" stroke-linecap="round" stroke-linejoin="round" />
<path d="M574.78 153.17 L577.93 153.34" fill="none" stroke="#1c2a3a" stroke-width="1.6896000000000002" stroke-linecap="round" stroke-linejoin="round" />
<text x="600.6" y="169" font-family="Liberation Sans" font-size="23.3" fill="#e6e6e6" font-weight="normal" text-anchor="start" stroke="#e6e6e6" stroke-width="0.8" style="white-space:pre;" >PhonePrototype</text>
<path d="M781.8 152.5 L786.8 161 L781.8 169.5" fill="none" stroke="#8c8c8c" stroke-width="2.3" stroke-linecap="round" stroke-linejoin="round" />
<path d="M805 153 Q805 150 808 150 L813.415 150 L816.415 152.5 L827.5 152.5 Q830.5 152.5 830.5 155.5 L830.5 167.5 Q830.5 170.5 827.5 170.5 L808 170.5 Q805 170.5 805 167.5 Z" fill="#727578" stroke="none" stroke-width="2" stroke-linecap="round" stroke-linejoin="round" />
<rect x="805" y="156.765" width="25.5" height="1.8" fill="#1f1f1f" />
<text x="843" y="169" font-family="Liberation Sans" font-size="23.3" fill="#e6e6e6" font-weight="normal" text-anchor="start" stroke="#e6e6e6" stroke-width="0.8" style="white-space:pre;" >PhonePrototype</text>
<path d="M1023.8 152.5 L1028.8 161 L1023.8 169.5" fill="none" stroke="#8c8c8c" stroke-width="2.3" stroke-linecap="round" stroke-linejoin="round" />
<path d="M13.543 3.41c4.114 2.47 6.545 7.162 5.549 11.131-.024.093-.05.181-.076.272l.002.001c2.062 2.538 1.5 5.258 1.236 4.745-1.072-2.086-3.066-1.568-4.088-1.043a6.803 6.803 0 0 1-.281.158l-.02.012-.002.002c-2.115 1.123-4.957 1.205-7.812-.022a12.568 12.568 0 0 1-5.64-4.838c.649.48 1.35.902 2.097 1.252 3.019 1.414 6.051 1.311 8.197-.002C9.651 12.73 7.101 9.736 5.146 7.545a18.849 18.849 0 0 1-1.125-1.477c2.05 1.957 5.322 3.27 6.525 3.906C8.073 7.407 5.862 4.212 5.942 4.281c3.035 3.044 7.226 4.743 7.548 4.87 1.252-3.378-.46-5.3-.46-5.3z" fill="#f8963e" transform="translate(1043.61,145.98) scale(1.4075,1.3262)"/>
<text x="1084.4" y="169" font-family="Liberation Sans" font-size="23.35" fill="#e6e6e6" font-weight="normal" text-anchor="start" stroke="#e6e6e6" stroke-width="0.8" style="white-space:pre;" >PhonePrototypeApp</text>
<path d="M1308.3 152.5 L1313.3 161 L1308.3 169.5" fill="none" stroke="#8c8c8c" stroke-width="2.3" stroke-linecap="round" stroke-linejoin="round" />
<rect x="1330" y="147" width="28" height="27" fill="#5bc4d4" rx="5" />
<text x="1344" y="169.3" font-family="Liberation Sans" font-size="23" fill="#ffffff" font-weight="normal" text-anchor="middle" stroke="#ffffff" stroke-width="0.5" style="white-space:pre;" >P</text>
<text x="1368.7" y="169" font-family="Liberation Sans" font-size="23.1" fill="#e6e6e6" font-weight="normal" text-anchor="start" stroke="#e6e6e6" stroke-width="0.8" style="white-space:pre;" >body</text>
<rect x="632.5" y="194" width="13.5" height="211.5" fill="#3c3c42" rx="6.75" />
<rect x="632.5" y="554.6" width="13.5" height="247" fill="#3c3c42" rx="6.75" />
<rect x="632.5" y="590" width="13.5" height="175.6" fill="#4b4b51" rx="6.75" stroke="#333338" stroke-width="1"/>
<rect x="632.5" y="626" width="13.5" height="104.5" fill="#5f5f65" rx="6.75" stroke="#3a3a40" stroke-width="1"/>
<rect x="861" y="660" width="257" height="36" fill="#646f83" />
<text x="668.2" y="218" font-family="Liberation Mono" font-size="26.779" fill="#7f8c98" font-weight="normal" text-anchor="start" stroke="#7f8c98" stroke-width="0.55" transform="matrix(1 0 0 1.02 0 -4.360)" style="white-space:pre;" >//</text>
<rect x="617.5" y="201.8" width="3.7" height="18.2" fill="#7c7c82" />
<path d="M617.80 201.80 L613.00 205.30 L613.00 208.30 L617.80 205.40 Z" fill="#7c7c82" stroke="none" stroke-width="2" stroke-linecap="round" stroke-linejoin="round" />
<text x="668.2" y="254" font-family="Liberation Mono" font-size="26.779" fill="#7f8c98" font-weight="normal" text-anchor="start" stroke="#7f8c98" stroke-width="0.55" transform="matrix(1 0 0 1.02 0 -5.080)" style="white-space:pre;" >//  PhonePrototypeApp.swift</text>
<text x="625.4" y="256" font-family="Liberation Sans" font-size="25" fill="#7c7c82" font-weight="normal" text-anchor="end" stroke="#7c7c82" stroke-width="0.5" transform="matrix(1 0 0 1.02 0 -5.120)" style="white-space:pre;" >2</text>
<text x="668.2" y="290" font-family="Liberation Mono" font-size="26.779" fill="#7f8c98" font-weight="normal" text-anchor="start" stroke="#7f8c98" stroke-width="0.55" transform="matrix(1 0 0 1.02 0 -5.800)" style="white-space:pre;" >//  PhonePrototype</text>
<text x="625.4" y="292" font-family="Liberation Sans" font-size="25" fill="#7c7c82" font-weight="normal" text-anchor="end" stroke="#7c7c82" stroke-width="0.5" transform="matrix(1 0 0 1.02 0 -5.840)" style="white-space:pre;" >3</text>
<text x="668.2" y="326" font-family="Liberation Mono" font-size="26.779" fill="#7f8c98" font-weight="normal" text-anchor="start" stroke="#7f8c98" stroke-width="0.55" transform="matrix(1 0 0 1.02 0 -6.520)" style="white-space:pre;" >//</text>
<text x="625.4" y="328" font-family="Liberation Sans" font-size="25" fill="#7c7c82" font-weight="normal" text-anchor="end" stroke="#7c7c82" stroke-width="0.5" transform="matrix(1 0 0 1.02 0 -6.560)" style="white-space:pre;" >4</text>
<text x="668.2" y="362" font-family="Liberation Mono" font-size="26.779" fill="#7f8c98" font-weight="normal" text-anchor="start" stroke="#7f8c98" stroke-width="0.55" transform="matrix(1 0 0 1.02 0 -7.240)" style="white-space:pre;" >//  Created by Russell Gordon on 2023–11–05.</text>
<text x="625.4" y="364" font-family="Liberation Sans" font-size="25" fill="#7c7c82" font-weight="normal" text-anchor="end" stroke="#7c7c82" stroke-width="0.5" transform="matrix(1 0 0 1.02 0 -7.280)" style="white-space:pre;" >5</text>
<text x="668.2" y="398" font-family="Liberation Mono" font-size="26.779" fill="#7f8c98" font-weight="normal" text-anchor="start" stroke="#7f8c98" stroke-width="0.55" transform="matrix(1 0 0 1.02 0 -7.960)" style="white-space:pre;" >//</text>
<text x="625.4" y="400" font-family="Liberation Sans" font-size="25" fill="#7c7c82" font-weight="normal" text-anchor="end" stroke="#7c7c82" stroke-width="0.5" transform="matrix(1 0 0 1.02 0 -8.000)" style="white-space:pre;" >6</text>
<text x="625.4" y="436" font-family="Liberation Sans" font-size="25" fill="#7c7c82" font-weight="normal" text-anchor="end" stroke="#7c7c82" stroke-width="0.5" transform="matrix(1 0 0 1.02 0 -8.720)" style="white-space:pre;" >7</text>
<text x="668.2" y="470" font-family="Liberation Mono" font-size="26.779" fill="#ff7ab2" font-weight="bold" text-anchor="start" stroke="#ff7ab2" stroke-width="0.25" transform="matrix(1 0 0 1.02 0 -9.400)" style="white-space:pre;" >import</text>
<text x="764.62" y="470" font-family="Liberation Mono" font-size="26.779" fill="#dfdfe0" font-weight="normal" text-anchor="start" stroke="#dfdfe0" stroke-width="0.55" transform="matrix(1 0 0 1.02 0 -9.400)" style="white-space:pre;" > SwiftUI</text>
<text x="625.4" y="472" font-family="Liberation Sans" font-size="25" fill="#7c7c82" font-weight="normal" text-anchor="end" stroke="#7c7c82" stroke-width="0.5" transform="matrix(1 0 0 1.02 0 -9.440)" style="white-space:pre;" >8</text>
<text x="625.4" y="508" font-family="Liberation Sans" font-size="25" fill="#7c7c82" font-weight="normal" text-anchor="end" stroke="#7c7c82" stroke-width="0.5" transform="matrix(1 0 0 1.02 0 -10.160)" style="white-space:pre;" >9</text>
<text x="668.2" y="542" font-family="Liberation Mono" font-size="26.779" fill="#ff7ab2" font-weight="bold" text-anchor="start" stroke="#ff7ab2" stroke-width="0.25" transform="matrix(1 0 0 1.02 0 -10.840)" style="white-space:pre;" >@main</text>
<text x="625.4" y="544" font-family="Liberation Sans" font-size="25" fill="#7c7c82" font-weight="normal" text-anchor="end" stroke="#7c7c82" stroke-width="0.5" transform="matrix(1 0 0 1.02 0 -10.880)" style="white-space:pre;" >0</text>
<rect x="605.0" y="525.8" width="3.7" height="18.2" fill="#7c7c82" />
<path d="M605.30 525.80 L600.50 529.30 L600.50 532.30 L605.30 529.40 Z" fill="#7c7c82" stroke="none" stroke-width="2" stroke-linecap="round" stroke-linejoin="round" />
<text x="668.2" y="578" font-family="Liberation Mono" font-size="26.779" fill="#ff7ab2" font-weight="bold" text-anchor="start" stroke="#ff7ab2" stroke-width="0.25" transform="matrix(1 0 0 1.02 0 -11.560)" style="white-space:pre;" >struct</text>
<text x="780.69" y="578" font-family="Liberation Mono" font-size="26.779" fill="#6bdfff" font-weight="normal" text-anchor="start" stroke="#6bdfff" stroke-width="0.55" transform="matrix(1 0 0 1.02 0 -11.560)" style="white-space:pre;" >PhonePrototypeApp</text>
<text x="1053.88" y="578" font-family="Liberation Mono" font-size="26.779" fill="#dfdfe0" font-weight="normal" text-anchor="start" stroke="#dfdfe0" stroke-width="0.55" transform="matrix(1 0 0 1.02 0 -11.560)" style="white-space:pre;" >: </text>
<text x="1086.02" y="578" font-family="Liberation Mono" font-size="26.779" fill="#dabaff" font-weight="normal" text-anchor="start" stroke="#dabaff" stroke-width="0.55" transform="matrix(1 0 0 1.02 0 -11.560)" style="white-space:pre;" >App</text>
<text x="1134.23" y="578" font-family="Liberation Mono" font-size="26.779" fill="#dfdfe0" font-weight="normal" text-anchor="start" stroke="#dfdfe0" stroke-width="0.55" transform="matrix(1 0 0 1.02 0 -11.560)" style="white-space:pre;" > {</text>
<rect x="617.5" y="561.8" width="3.7" height="18.2" fill="#7c7c82" />
<path d="M617.80 561.80 L613.00 565.30 L613.00 568.30 L617.80 565.40 Z" fill="#7c7c82" stroke="none" stroke-width="2" stroke-linecap="round" stroke-linejoin="round" />
<rect x="605.0" y="561.8" width="3.7" height="18.2" fill="#7c7c82" />
<path d="M605.30 561.80 L600.50 565.30 L600.50 568.30 L605.30 565.40 Z" fill="#7c7c82" stroke="none" stroke-width="2" stroke-linecap="round" stroke-linejoin="round" />
<text x="732.48" y="614" font-family="Liberation Mono" font-size="26.779" fill="#ff7ab2" font-weight="bold" text-anchor="start" stroke="#ff7ab2" stroke-width="0.25" transform="matrix(1 0 0 1.02 0 -12.280)" style="white-space:pre;" >var</text>
<text x="796.76" y="614" font-family="Liberation Mono" font-size="26.779" fill="#4eb0cc" font-weight="normal" text-anchor="start" stroke="#4eb0cc" stroke-width="0.55" transform="matrix(1 0 0 1.02 0 -12.280)" style="white-space:pre;" >body</text>
<text x="861.04" y="614" font-family="Liberation Mono" font-size="26.779" fill="#dfdfe0" font-weight="normal" text-anchor="start" stroke="#dfdfe0" stroke-width="0.55" transform="matrix(1 0 0 1.02 0 -12.280)" style="white-space:pre;" >: </text>
<text x="893.18" y="614" font-family="Liberation Mono" font-size="26.779" fill="#ff7ab2" font-weight="bold" text-anchor="start" stroke="#ff7ab2" stroke-width="0.25" transform="matrix(1 0 0 1.02 0 -12.280)" style="white-space:pre;" >some</text>
<text x="973.53" y="614" font-family="Liberation Mono" font-size="26.779" fill="#dabaff" font-weight="normal" text-anchor="start" stroke="#dabaff" stroke-width="0.55" transform="matrix(1 0 0 1.02 0 -12.280)" style="white-space:pre;" >Scene</text>
<text x="1053.88" y="614" font-family="Liberation Mono" font-size="26.779" fill="#dfdfe0" font-weight="normal" text-anchor="start" stroke="#dfdfe0" stroke-width="0.55" transform="matrix(1 0 0 1.02 0 -12.280)" style="white-space:pre;" > {</text>
<text x="625.4" y="616" font-family="Liberation Sans" font-size="25" fill="#7c7c82" font-weight="normal" text-anchor="end" stroke="#7c7c82" stroke-width="0.5" transform="matrix(1 0 0 1.02 0 -12.320)" style="white-space:pre;" >2</text>
<rect x="605.0" y="597.8" width="3.7" height="18.2" fill="#7c7c82" />
<path d="M605.30 597.80 L600.50 601.30 L600.50 604.30 L605.30 601.40 Z" fill="#7c7c82" stroke="none" stroke-width="2" stroke-linecap="round" stroke-linejoin="round" />
<text x="796.76" y="650" font-family="Liberation Mono" font-size="26.779" fill="#dabaff" font-weight="normal" text-anchor="start" stroke="#dabaff" stroke-width="0.55" transform="matrix(1 0 0 1.02 0 -13.000)" style="white-space:pre;" >WindowGroup</text>
<text x="973.53" y="650" font-family="Liberation Mono" font-size="26.779" fill="#dfdfe0" font-weight="normal" text-anchor="start" stroke="#dfdfe0" stroke-width="0.55" transform="matrix(1 0 0 1.02 0 -13.000)" style="white-space:pre;" > {</text>
<text x="625.4" y="652" font-family="Liberation Sans" font-size="25" fill="#7c7c82" font-weight="normal" text-anchor="end" stroke="#7c7c82" stroke-width="0.5" transform="matrix(1 0 0 1.02 0 -13.040)" style="white-space:pre;" >3</text>
<rect x="605.0" y="633.8" width="3.7" height="18.2" fill="#7c7c82" />
<path d="M605.30 633.80 L600.50 637.30 L600.50 640.30 L605.30 637.40 Z" fill="#7c7c82" stroke="none" stroke-width="2" stroke-linecap="round" stroke-linejoin="round" />
<text x="861.04" y="686" font-family="Liberation Mono" font-size="26.779" fill="#9ef1dd" font-weight="normal" text-anchor="start" stroke="#9ef1dd" stroke-width="0.55" transform="matrix(1 0 0 1.02 0 -13.720)" style="white-space:pre;" >FavouritesView</text>
<text x="1086.02" y="686" font-family="Liberation Mono" font-size="26.779" fill="#dfdfe0" font-weight="normal" text-anchor="start" stroke="#dfdfe0" stroke-width="0.55" transform="matrix(1 0 0 1.02 0 -13.720)" style="white-space:pre;" >()</text>
<text x="625.4" y="688" font-family="Liberation Sans" font-size="25" fill="#ffffff" font-weight="normal" text-anchor="end" stroke="#ffffff" stroke-width="0.5" transform="matrix(1 0 0 1.02 0 -13.760)" style="white-space:pre;" >4</text>
<rect x="605.0" y="669.8" width="3.7" height="18.2" fill="#ffffff" />
<path d="M605.30 669.80 L600.50 673.30 L600.50 676.30 L605.30 673.40 Z" fill="#ffffff" stroke="none" stroke-width="2" stroke-linecap="round" stroke-linejoin="round" />
<text x="668.2" y="722" font-family="Liberation Mono" font-size="26.779" fill="#dfdfe0" font-weight="normal" text-anchor="start" stroke="#dfdfe0" stroke-width="0.55" transform="matrix(1 0 0 1.02 0 -14.440)" style="white-space:pre;" >        }</text>
<text x="625.4" y="724" font-family="Liberation Sans" font-size="25" fill="#7c7c82" font-weight="normal" text-anchor="end" stroke="#7c7c82" stroke-width="0.5" transform="matrix(1 0 0 1.02 0 -14.480)" style="white-space:pre;" >5</text>
<rect x="605.0" y="705.8" width="3.7" height="18.2" fill="#7c7c82" />
<path d="M605.30 705.80 L600.50 709.30 L600.50 712.30 L605.30 709.40 Z" fill="#7c7c82" stroke="none" stroke-width="2" stroke-linecap="round" stroke-linejoin="round" />
<text x="668.2" y="758" font-family="Liberation Mono" font-size="26.779" fill="#dfdfe0" font-weight="normal" text-anchor="start" stroke="#dfdfe0" stroke-width="0.55" transform="matrix(1 0 0 1.02 0 -15.160)" style="white-space:pre;" >    }</text>
<text x="625.4" y="760" font-family="Liberation Sans" font-size="25" fill="#7c7c82" font-weight="normal" text-anchor="end" stroke="#7c7c82" stroke-width="0.5" transform="matrix(1 0 0 1.02 0 -15.200)" style="white-space:pre;" >6</text>
<rect x="605.0" y="741.8" width="3.7" height="18.2" fill="#7c7c82" />
<path d="M605.30 741.80 L600.50 745.30 L600.50 748.30 L605.30 745.40 Z" fill="#7c7c82" stroke="none" stroke-width="2" stroke-linecap="round" stroke-linejoin="round" />
<text x="668.2" y="794" font-family="Liberation Mono" font-size="26.779" fill="#dfdfe0" font-weight="normal" text-anchor="start" stroke="#dfdfe0" stroke-width="0.55" transform="matrix(1 0 0 1.02 0 -15.880)" style="white-space:pre;" >}</text>
<text x="625.4" y="796" font-family="Liberation Sans" font-size="25" fill="#7c7c82" font-weight="normal" text-anchor="end" stroke="#7c7c82" stroke-width="0.5" transform="matrix(1 0 0 1.02 0 -15.920)" style="white-space:pre;" >7</text>
<rect x="605.0" y="777.8" width="3.7" height="18.2" fill="#7c7c82" />
<path d="M605.30 777.80 L600.50 781.30 L600.50 784.30 L605.30 781.40 Z" fill="#7c7c82" stroke="none" stroke-width="2" stroke-linecap="round" stroke-linejoin="round" />
<text x="625.4" y="832" font-family="Liberation Sans" font-size="25" fill="#7c7c82" font-weight="normal" text-anchor="end" stroke="#7c7c82" stroke-width="0.5" transform="matrix(1 0 0 1.02 0 -16.640)" style="white-space:pre;" >8</text>
<rect x="605.0" y="813.8" width="3.7" height="18.2" fill="#7c7c82" />
<path d="M605.30 813.80 L600.50 817.30 L600.50 820.30 L605.30 817.40 Z" fill="#7c7c82" stroke="none" stroke-width="2" stroke-linecap="round" stroke-linejoin="round" />
<path d="M574 1620 L592 1620 Q594 1620 595.5 1622 L598.5 1629 L595.5 1636 Q594 1638.2 592 1638.2 L574 1638.2 Q569 1638.2 569 1633.2 L569 1625 Q569 1620 574 1620 Z" fill="#3a7cf5" stroke="none" stroke-width="2" stroke-linecap="round" stroke-linejoin="round" />
<line x1="614.5" y1="1618" x2="614.5" y2="1641" stroke="#3c3c3c" stroke-width="2" stroke-linecap="round"/>
<rect x="638" y="1616.5" width="5" height="24.5" fill="none" stroke="#a0a0a0" stroke-width="1.8" rx="2.5" />
<rect x="649" y="1616.5" width="5" height="24.5" fill="none" stroke="#a0a0a0" stroke-width="1.8" rx="2.5" />
<path d="M693 1633.6 L706 1620.6 L718.5 1632.7 M718.5 1625.3 L718.5 1632.7 L711.2 1632.7" fill="none" stroke="#6e6e6e" stroke-width="1.8" stroke-linecap="round" stroke-linejoin="round" />
<rect x="698.5" y="1636" width="15" height="5" fill="none" stroke="#6e6e6e" stroke-width="1.8" />
<path d="M765.7 1616 L765.7 1632 M759.5 1626 L765.7 1632 L772 1626" fill="none" stroke="#6e6e6e" stroke-width="1.8" stroke-linecap="round" stroke-linejoin="round" />
<rect x="757.8" y="1636" width="16" height="5" fill="none" stroke="#6e6e6e" stroke-width="1.8" />
<path d="M825.9 1632 L825.9 1616.5 M819.5 1622.5 L825.9 1616.5 L832 1622.5" fill="none" stroke="#6e6e6e" stroke-width="1.8" stroke-linecap="round" stroke-linejoin="round" />
<rect x="817.8" y="1636" width="16" height="5" fill="none" stroke="#6e6e6e" stroke-width="1.8" />
<line x1="857.2" y1="1618" x2="857.2" y2="1641" stroke="#3c3c3c" stroke-width="2" stroke-linecap="round"/>
<path d="M885.8 1627.5 L898.6 1621.8 L898.6 1636.2 L885.8 1642 Z" fill="none" stroke="#a0a0a0" stroke-width="1.8" stroke-linecap="round" stroke-linejoin="round" />
<path d="M881.5 1637.8 L881.5 1624.2 L894.2 1619" fill="none" stroke="#a0a0a0" stroke-width="1.8" stroke-linecap="round" stroke-linejoin="round" />
<path d="M877.3 1634.6 L877.3 1621 L890 1616.6" fill="none" stroke="#a0a0a0" stroke-width="1.8" stroke-linecap="round" stroke-linejoin="round" />
<circle cx="939.7" cy="1621.3" r="3.9" fill="none" stroke="#a0a0a0" stroke-width="1.8"/>
<circle cx="955.7" cy="1629" r="3.9" fill="none" stroke="#a0a0a0" stroke-width="1.8"/>
<circle cx="939.7" cy="1637" r="3.9" fill="none" stroke="#a0a0a0" stroke-width="1.8"/>
<path d="M943.3 1623.2 L952 1627.2 M943.3 1635 L952 1630.8" fill="none" stroke="#a0a0a0" stroke-width="1.8" stroke-linecap="round" stroke-linejoin="round" />
<rect x="998" y="1616.8" width="20.5" height="10.5" fill="none" stroke="#a0a0a0" stroke-width="1.8" rx="5.25" />
<circle cx="1003.7" cy="1622" r="2.8" fill="#a0a0a0" stroke="none" stroke-width="2"/>
<rect x="998" y="1630.8" width="20.5" height="10.5" fill="none" stroke="#a0a0a0" stroke-width="1.8" rx="5.25" />
<circle cx="1012.8" cy="1636" r="2.8" fill="#a0a0a0" stroke="none" stroke-width="2"/>
<path d="M1056.5 1627.5 L1080 1616.8 L1069.5 1641 L1067.8 1629.3 Z" fill="none" stroke="#a0a0a0" stroke-width="1.8" stroke-linecap="round" stroke-linejoin="round" />
<line x1="1098.6" y1="1618" x2="1098.6" y2="1641" stroke="#3c3c3c" stroke-width="2" stroke-linecap="round"/>
<rect x="1118" y="1616.6" width="23.4" height="23.4" fill="#999999" rx="5.148" />
<path d="M1130.48 1622.53 L1124.55 1633.92" fill="none" stroke="#262626" stroke-width="1.716" stroke-linecap="round" stroke-linejoin="round" />
<path d="M1131.18 1626.74 L1135.39 1633.92" fill="none" stroke="#262626" stroke-width="1.716" stroke-linecap="round" stroke-linejoin="round" />
<path d="M1122.91 1630.48 L1136.88 1630.48" fill="none" stroke="#262626" stroke-width="1.716" stroke-linecap="round" stroke-linejoin="round" />
<path d="M1128.76 1622.06 L1131.65 1622.22" fill="none" stroke="#262626" stroke-width="1.5444" stroke-linecap="round" stroke-linejoin="round" />
<text x="1154.5" y="1637" font-family="Liberation Sans" font-size="23.3" fill="#e6e6e6" font-weight="normal" text-anchor="start" stroke="#e6e6e6" stroke-width="0.8" style="white-space:pre;" >PhonePrototype</text>
<text x="2937" y="1637.3" font-family="Liberation Sans" font-size="22.8" fill="#9e9e9e" font-weight="bold" text-anchor="end" style="white-space:pre;" >16 characters</text>
<line x1="2955" y1="1617.5" x2="2955" y2="1640.5" stroke="#3c3c3c" stroke-width="2" stroke-linecap="round"/>
<rect x="2974.3" y="1617" width="24" height="24" fill="none" stroke="#a8a8a8" stroke-width="2" rx="4" />
<rect x="2977" y="1632" width="18.5" height="6" fill="#a8a8a8" rx="1.5" />
<text x="562.3" y="1868" font-family="Liberation Sans" font-size="22.7" fill="#e6e6e6" font-weight="normal" text-anchor="start" stroke="#e6e6e6" stroke-width="0.8" style="white-space:pre;" >Auto</text>
<path d="M618 1857.5 L623 1852.8 L628 1857.5 M618 1863 L623 1867.7 L628 1863" fill="none" stroke="#c8c8c8" stroke-width="1.8" stroke-linecap="round" stroke-linejoin="round" />
<line x1="657" y1="1849" x2="657" y2="1873" stroke="#444444" stroke-width="1.5" stroke-linecap="round"/>
<path d="M676.5 1861 Q691 1844 705.5 1861 Q691 1878 676.5 1861 Z" fill="none" stroke="#6a6a6a" stroke-width="1.6" stroke-linecap="round" stroke-linejoin="round" />
<circle cx="691" cy="1861" r="5.9" fill="#6a6a6a" stroke="none" stroke-width="2"/>
<circle cx="691" cy="1861" r="1.6" fill="#1f1f1f" stroke="none" stroke-width="2"/>
<circle cx="745" cy="1861" r="12.6" fill="none" stroke="#6a6a6a" stroke-width="1.6"/>
<circle cx="745" cy="1854.5" r="1.4" fill="#6a6a6a" stroke="none" stroke-width="2"/>
<path d="M742 1859 L745.5 1859 L745.5 1867 M742 1867.5 L749 1867.5" fill="none" stroke="#6a6a6a" stroke-width="1.8" stroke-linecap="round" stroke-linejoin="round" />
<rect x="2562.5" y="1838.5" width="345" height="43" fill="#333333" rx="11" stroke="#454545" stroke-width="1"/>
<circle cx="2585" cy="1860" r="12.3" fill="none" stroke="#e6e6e6" stroke-width="1.9"/>
<path d="M2578 1856 L2592 1856 M2580.5 1861 L2589.5 1861 M2583 1866 L2587 1866" fill="none" stroke="#e6e6e6" stroke-width="1.9" stroke-linecap="round" stroke-linejoin="round" />
<text x="2607" y="1868" font-family="Liberation Sans" font-size="23.4" fill="#8a8a8a" font-weight="normal" text-anchor="start" stroke="#8a8a8a" stroke-width="0.8" style="white-space:pre;" >Filter</text>
<line x1="2919" y1="1847.5" x2="2919" y2="1870" stroke="#444444" stroke-width="1.5" stroke-linecap="round"/>
<rect x="2938.3" y="1847.5" width="23.5" height="23.5" fill="none" stroke="#3d85f6" stroke-width="2.2" rx="4.5" />
<rect x="2941.5" y="1850.5" width="5" height="17.5" fill="#3d85f6" rx="2.5" />
<rect x="2980" y="1847.5" width="23.5" height="23.5" fill="none" stroke="#a0a0a0" stroke-width="2" rx="4.5" />
<rect x="2996" y="1850.5" width="5" height="17.5" fill="#a0a0a0" rx="2.5" />
</svg>
</body></html>
